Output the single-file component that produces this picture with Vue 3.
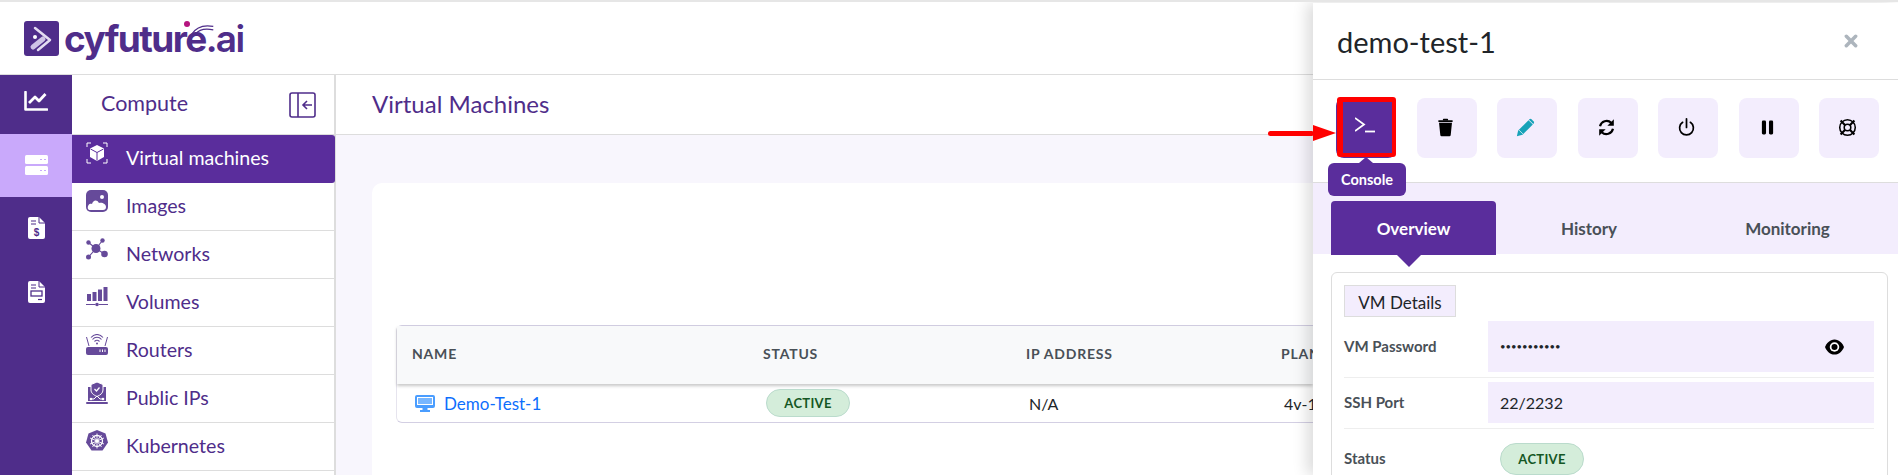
<template>
  <div class="app">
    <header class="topbar">
      <div class="logo">
        <svg class="logo-mark" viewBox="0 0 35 35">
          <rect width="35" height="35" rx="3" fill="#4f2d8a" />
          <path d="M11 7 L26 19 L14 29" fill="none" stroke="#e4dcf2" stroke-width="2.5" stroke-linecap="round" stroke-linejoin="round" />
          <path d="M9 26 L19 18" stroke="#cfc3e6" stroke-width="5" stroke-linecap="round" />
          <circle cx="11" cy="16" r="2" fill="#fff" />
        </svg>
        <span class="logo-text">cyfuture<span class="logo-ai">.ai</span></span>
        <span class="logo-dot"></span>
        <svg class="logo-arc" viewBox="0 0 30 14">
          <path d="M2 13 C7 5 16 2 27 4" fill="none" stroke="#4f2d8a" stroke-width="1.6" />
          <path d="M6 13 C10 8 18 6 27 8" fill="none" stroke="#4f2d8a" stroke-width="1.4" />
        </svg>
      </div>
    </header>

    <div class="body">
      <nav class="rail">
        <a v-for="item in railItems" :key="item.key" class="rail-item" :class="{ on: item.on }" :style="{ height: item.height + 'px' }">
          <svg :width="item.w" :height="item.h" :viewBox="`0 0 ${item.w} ${item.h}`" v-html="item.svg"></svg>
        </a>
      </nav>

      <aside class="side">
        <div class="side-head">
          <span>Compute</span>
          <svg class="collapse" viewBox="0 0 27 26" fill="none" stroke="#4f2d8a" stroke-width="1.6">
            <rect x="1" y="1" width="25" height="24" rx="2" />
            <path d="M9 1V25" />
            <path d="M23 13H14M18 9l-4 4 4 4" />
          </svg>
        </div>
        <a v-for="row in sideRows" :key="row.label" class="side-row" :class="{ active: row.active }">
          <svg class="side-icon" viewBox="0 0 22 22" v-html="row.svg"></svg>
          <span class="side-label">{{ row.label }}</span>
        </a>
        <div class="side-row"></div>
      </aside>

      <main class="main">
        <div class="page-head">Virtual Machines</div>
        <div class="page-body">
          <section class="card">
            <div class="table">
              <div class="thead">
                <div v-for="col in columns" :key="col" class="th">{{ col }}</div>
              </div>
              <div class="tbody">
                <div class="td name-cell">
                  <svg class="monitor" viewBox="0 0 20 17" fill="#4a9dff">
                    <path d="M2 0H18A2 2 0 0 1 20 2V11A2 2 0 0 1 18 13H2A2 2 0 0 1 0 11V2A2 2 0 0 1 2 0ZM2 2V10H18V2Z" />
                    <path d="M3 3H17V9H3Z" opacity=".75" />
                    <path d="M7.5 13H12.5V15H15V17H5V15H7.5Z" />
                  </svg>
                  <a class="vm-link">Demo-Test-1</a>
                </div>
                <div class="td"><span class="badge">ACTIVE</span></div>
                <div class="td">N/A</div>
                <div class="td">4v-1</div>
              </div>
            </div>
          </section>
        </div>
      </main>
    </div>

    <aside class="drawer">
      <div class="drawer-head">
        <h2>demo-test-1</h2>
        <svg class="close" viewBox="0 0 12 12" stroke="#adb5bd" stroke-width="3" stroke-linecap="round">
          <path d="M2 2L10 10M10 2L2 10" />
        </svg>
      </div>

      <div class="actions">
        <button v-for="action in actions" :key="action.key" class="action" :class="{ current: action.current }">
          <svg class="action-icon" viewBox="0 0 22 22" v-html="action.svg"></svg>
          <span v-if="action.current" class="tooltip">Console</span>
        </button>
      </div>

      <div class="tabs">
        <div v-for="tab in tabs" :key="tab.label" class="tab" :class="{ active: tab.active }" :style="{ width: tab.width + 'px' }">{{ tab.label }}</div>
      </div>

      <div class="details">
        <div class="details-title">VM Details</div>
        <div class="detail-row">
          <label>VM Password</label>
          <div class="value tall">
            <span class="dots">•••••••••••</span>
            <svg class="eye" viewBox="0 0 20 16">
              <path d="M10 0C5 0 1.500 4 0 8C1.500 12 5 16 10 16S18.500 12 20 8C18.500 4 15 0 10 0Z" fill="#000" />
              <circle cx="10" cy="8" r="5" fill="#fff" />
              <circle cx="10" cy="8" r="3.200" fill="#000" />
            </svg>
          </div>
        </div>
        <div class="detail-row">
          <label>SSH Port</label>
          <div class="value">22/2232</div>
        </div>
        <div class="detail-row plain">
          <label>Status</label>
          <div class="status-wrap"><span class="badge wide">ACTIVE</span></div>
        </div>
      </div>
    </aside>

    <div class="red-arrow">
      <span class="arrow-line"></span>
      <span class="arrow-head"></span>
    </div>
  </div>
</template>

<script setup>
const docTop = `<path d="M2 0H11L17 6V20A2 2 0 0 1 15 22H2A2 2 0 0 1 0 20V2A2 2 0 0 1 2 0Z" fill="#fff"/><path d="M11 0V6H17" fill="none" stroke="#4f2d8a" stroke-width="1"/><path d="M3 4H8M3 7H8" stroke="#4f2d8a" stroke-width="1.2"/>`

const railItems = [
  {
    key: 'chart', height: 59, w: 24, h: 20,
    svg: `<path d="M1.500 1V18.500H23" fill="none" stroke="#fff" stroke-width="2.600" stroke-linecap="round" stroke-linejoin="round"/><path d="M5 12L11 6L15 10L21.500 3" fill="none" stroke="#fff" stroke-width="2.800" stroke-linejoin="round"/>`
  },
  {
    key: 'server', height: 63, on: true, w: 24, h: 20,
    svg: `<rect x="1" width="23" height="9" rx="1.500" fill="#fff"/><rect x="1" y="11" width="23" height="9" rx="1.500" fill="#fff"/><path d="M16 4.500h2M20 4.500h2M16 15.500h2M20 15.500h2" stroke="#c9a9fb" stroke-width="1"/>`
  },
  {
    key: 'invoice', height: 64, w: 17, h: 22,
    svg: `${docTop}<text x="8.500" y="18.500" font-family="Liberation Sans" font-size="10" font-weight="700" text-anchor="middle" fill="#4f2d8a">$</text>`
  },
  {
    key: 'billing', height: 64, w: 17, h: 22,
    svg: `${docTop}<rect x="3" y="10" width="11" height="5" fill="none" stroke="#4f2d8a" stroke-width="1.300"/><path d="M10 18.500H14" stroke="#4f2d8a" stroke-width="1.200"/>`
  }
]

const sideRows = [
  {
    label: 'Virtual machines', active: true,
    svg: `<path d="M1 5V1H5M17 1H21V5M21 17V21H17M5 21H1V17" fill="none" stroke="#fff" stroke-width="1"/><path d="M11 3L18 6.500V15L11 19L4 15V6.500Z" fill="#fff"/><path d="M4.500 7L11 10.500L17.500 7M11 10.500V18.500" fill="none" stroke="#5a2d9c" stroke-width="1"/>`
  },
  {
    label: 'Images',
    svg: `<rect width="22" height="22" rx="5" fill="#664a9a"/><circle cx="16" cy="7" r="2" fill="#fff"/><path d="M2 19C1 15 4 13 6 14C7 10 11 9 13 13C16 12 20 14 20 17C20 19 19 20 17 20H5C3.500 20 2.500 20 2 19Z" fill="#fff"/>`
  },
  {
    label: 'Networks',
    svg: `<path d="M10 10.500L2.500 4.500M10 10.500L16.500 2.500M10 10.500L2.500 19M10 10.500L18.500 16" stroke="#664a9a" stroke-width="1.100"/><circle cx="10" cy="10.500" r="4.500" fill="#664a9a"/><circle cx="2.500" cy="4.500" r="2.200" fill="#664a9a"/><circle cx="16.500" cy="2.500" r="2.200" fill="#664a9a"/><circle cx="2.500" cy="19" r="2.500" fill="#664a9a"/><circle cx="18.500" cy="16" r="3.300" fill="#664a9a"/>`
  },
  {
    label: 'Volumes',
    svg: `<path d="M1 8H5V15H1ZM6.500 6H10.500V15H6.500ZM12 3.500H16V15H12ZM17.500 1H21.500V15H17.500Z" fill="#664a9a"/><path d="M0 18.500H9M13 18.500H22" stroke="#664a9a" stroke-width="1.200"/><circle cx="11" cy="18.500" r="1.800" fill="#664a9a"/>`
  },
  {
    label: 'Routers',
    svg: `<path d="M6.500 5.500C9 2.500 13 2.500 15.500 5.500M8.500 7.500C10 6 12 6 13.500 7.500M5 3.500C8.500 -.500 13.500 -.500 17 3.500" fill="none" stroke="#664a9a" stroke-width="1.100"/><circle cx="11" cy="9.500" r="1" fill="#664a9a"/><path d="M.500 3L3 12M21.500 3L19 12" stroke="#664a9a" stroke-width="1"/><rect y="13" width="22" height="8" rx="2" fill="#664a9a"/><path d="M14 15.500V18M16.500 15.500V18M19 15.500V18" stroke="#fff" stroke-width="1"/>`
  },
  {
    label: 'Public IPs',
    svg: `<path d="M2 5H20V19H2Z" fill="#664a9a"/><path d="M11 0L17 2.500V8C17 11 14.500 13 11 14.500C7.500 13 5 11 5 8V2.500Z" fill="#664a9a" stroke="#fff" stroke-width="1"/><path d="M8.500 7L10.500 9L13.500 5.500" fill="none" stroke="#fff" stroke-width="1.200"/><path d="M4 17H8L11 14L14 17H18" fill="none" stroke="#fff" stroke-width="1"/><circle cx="5" cy="17" r="1.300" fill="#fff"/><circle cx="17" cy="17" r="1.300" fill="#fff"/><rect y="20" width="22" height="2" rx="1" fill="#664a9a"/>`
  },
  {
    label: 'Kubernetes',
    svg: `<path d="M11 0L19.500 3.500L22 12.500L16.500 20.500H5.500L0 12.500L2.500 3.500Z" fill="#664a9a"/><circle cx="11" cy="11" r="5.500" fill="none" stroke="#fff" stroke-width="1.300"/><path d="M11 3.500V18.500M4 8L18 14M18 8L4 14M6.500 17L15.500 5M15.500 17L6.500 5" stroke="#fff" stroke-width=".9"/><circle cx="11" cy="11" r="1.800" fill="#fff"/>`
  }
]

const columns = ['Name', 'Status', 'IP Address', 'Plan']

const actions = [
  {
    key: 'console', current: true,
    svg: `<path d="M0 2L9 8.500L0 15" fill="none" stroke="#fff" stroke-width="1.800"/><path d="M10 15.500H20" stroke="#fff" stroke-width="1.800"/>`
  },
  {
    key: 'delete',
    svg: `<path d="M3.500 5.500H18.500L17 20A1.500 1.500 0 0 1 15.500 21H6.500A1.500 1.500 0 0 1 5 20Z" fill="#000"/><rect x="2.500" y="2.500" width="17" height="2" rx="1" fill="#000"/><rect x="8" y="1" width="6" height="2" rx=".800" fill="#000"/>`
  },
  {
    key: 'edit',
    svg: `<path d="M1 21L2.500 14.500L14.500 2.500L19.500 7.500L7.500 19.500Z" fill="#17a2b8"/><path d="M15.500 1.500A2 2 0 0 1 18 1.500L20.500 4A2 2 0 0 1 20.500 6.500L20 7L15 2Z" fill="#17a2b8"/><path d="M3.500 14L8 18.500" stroke="#fff" stroke-width=".8"/>`
  },
  {
    key: 'restart',
    svg: `<path d="M3.500 9.500A7.800 7.800 0 0 1 16.500 5.500" fill="none" stroke="#000" stroke-width="2.500"/><path d="M19.500 1.500V9H12Z" fill="#000"/><path d="M18.500 12.500A7.800 7.800 0 0 1 5.500 16.500" fill="none" stroke="#000" stroke-width="2.500"/><path d="M2.500 20.500V13H10Z" fill="#000"/>`
  },
  {
    key: 'power',
    svg: `<path d="M6.500 5A8 8 0 1 0 15.500 5" fill="none" stroke="#000" stroke-width="2" stroke-linecap="round"/><path d="M11 1V11" stroke="#000" stroke-width="2" stroke-linecap="round"/>`
  },
  {
    key: 'pause',
    svg: `<rect x="4.500" y="3" width="4.800" height="16" rx="1.500" fill="#000"/><rect x="12.700" y="3" width="4.800" height="16" rx="1.500" fill="#000"/>`
  },
  {
    key: 'rescue',
    svg: `<circle cx="11" cy="11" r="9" fill="none" stroke="#000" stroke-width="1.800"/><circle cx="11" cy="11" r="3.800" fill="none" stroke="#000" stroke-width="1.800"/><path d="M3 3L8 8M19 3L14 8M3 19L8 14M19 19L14 14" stroke="#000" stroke-width="2.400"/>`
  }
]

const tabs = [
  { label: 'Overview', active: true, width: 165 },
  { label: 'History', width: 186 },
  { label: 'Monitoring', width: 211 }
]
</script>

<style scoped>
.app {
  position: relative;
  width: 1898px;
  height: 475px;
  overflow: hidden;
  background: #fff;
  border-top: 2px solid #e6e6e6;
  box-sizing: border-box;
  font-family: "Lato", "Noto Sans", sans-serif;
  color: #4f2d8a;
}

.topbar {
  height: 73px;
  box-sizing: border-box;
  border-bottom: 1px solid #ddd;
  padding: 19px 0 0 24px;
}

.logo {
  position: relative;
  display: flex;
  align-items: center;
  gap: 5px;
  width: 230px;
  height: 35px;
}

.logo-mark {
  width: 35px;
  height: 35px;
  flex: none;
}

.logo-text {
  font-family: "Inter", sans-serif;
  font-size: 37px;
  font-weight: 700;
  letter-spacing: -1.600px;
  line-height: 35px;
  color: #4f2d8a;
}

.logo-ai {
  font-weight: 600;
}

.logo-dot {
  position: absolute;
  left: 160px;
  top: 0;
  width: 6px;
  height: 6px;
  border-radius: 50%;
  background: #b5157f;
}

.logo-arc {
  position: absolute;
  left: 166px;
  top: 2px;
  width: 26px;
  height: 12px;
}

.body {
  display: flex;
  height: 400px;
}

.rail {
  width: 72px;
  flex: none;
  background: #4f2d8a;
}

.rail-item {
  display: flex;
  align-items: flex-start;
  justify-content: center;
  padding-top: 16px;
  box-sizing: border-box;
}

.rail-item.on {
  background: #c9a9fb;
  padding-top: 21px;
}

.rail-item:nth-child(3),
.rail-item:nth-child(4) {
  padding-top: 20px;
}

.side {
  width: 264px;
  flex: none;
  box-sizing: border-box;
  border-right: 2px solid #ddd;
}

.side-head {
  display: flex;
  align-items: center;
  justify-content: space-between;
  height: 60px;
  box-sizing: border-box;
  padding: 0 18px 0 29px;
  border-bottom: 1px solid #ddd;
  font-size: 21.500px;
}

.side-head span {
  margin-top: -3px;
}

.collapse {
  width: 27px;
  height: 26px;
}

.side-row {
  display: flex;
  align-items: flex-start;
  gap: 18px;
  height: 48px;
  box-sizing: border-box;
  padding: 7px 0 0 14px;
  border-bottom: 1px solid #ddd;
  font-size: 19.600px;
}

.side-row.active {
  background: #5a2d9c;
  color: #fff;
  border-bottom: 0;
  border-radius: 0 3px 3px 0;
  margin-right: -1px;
}

.side-icon {
  width: 22px;
  height: 22px;
  flex: none;
}

.side-label {
  margin-top: 4px;
  line-height: 23px;
}

.main {
  flex: 1;
  min-width: 0;
  display: flex;
  flex-direction: column;
}

.page-head {
  display: flex;
  align-items: center;
  height: 60px;
  box-sizing: border-box;
  padding: 0 0 3px 36px;
  border-bottom: 1px solid #ddd;
  font-size: 24px;
}

.page-body {
  flex: 1;
  min-width: 0;
  padding: 48px 585px 0 36px;
  background: #f8f6fd;
}

.card {
  height: 100%;
  padding: 142px 0 0 24px;
  box-sizing: border-box;
  background: #fff;
  border-radius: 10px 0 0 0;
  overflow: hidden;
}

.table {
  border-top: 1px solid #d3cfe3;
  border-bottom: 1px solid #d3cfe3;
  border-left: 1px solid #e6e4ee;
  border-radius: 6px 0 0 6px;
}

.thead,
.tbody {
  display: grid;
  grid-template-columns: 351px 263px 255px 1fr;
}

.thead {
  height: 58px;
  align-items: center;
  padding-bottom: 3px;
  box-sizing: border-box;
  background: #f8f9fa;
  box-shadow: 0 2px 3px rgba(0, 0, 0, 0.22);
  position: relative;
}

.th {
  padding-left: 15px;
  font-size: 14px;
  font-weight: 700;
  letter-spacing: 0.8px;
  text-transform: uppercase;
  color: #495057;
  white-space: nowrap;
  overflow: hidden;
}

.tbody {
  height: 38px;
  align-items: center;
}

.td {
  padding-left: 18px;
  font-size: 16px;
  color: #212529;
  white-space: nowrap;
  overflow: hidden;
}

.name-cell {
  display: flex;
  align-items: center;
  gap: 9px;
}

.monitor {
  width: 20px;
  height: 17px;
  flex: none;
}

.vm-link {
  color: #0d6efd;
  font-size: 17px;
}

.badge {
  display: inline-flex;
  align-items: center;
  justify-content: center;
  width: 84px;
  height: 28px;
  box-sizing: border-box;
  border: 1px solid #badbcc;
  border-radius: 14px;
  background: #d4edda;
  color: #155724;
  font-size: 13px;
  font-weight: 700;
  letter-spacing: 0.3px;
}

.badge.wide {
  height: 32px;
  border-radius: 16px;
}

.drawer {
  position: absolute;
  top: 1px;
  right: 0;
  bottom: 0;
  width: 585px;
  background: #fff;
  box-shadow: -6px 0 14px rgba(0, 0, 0, 0.14);
}

.drawer-head {
  display: flex;
  align-items: center;
  justify-content: space-between;
  height: 77px;
  box-sizing: border-box;
  padding: 0 40px 0 24px;
  border-bottom: 1px solid #ddd;
}

.drawer-head h2 {
  margin: 0;
  font-size: 29px;
  font-weight: 400;
  color: #212529;
}

.close {
  width: 14px;
  height: 14px;
}

.actions {
  display: flex;
  gap: 20.500px;
  height: 102px;
  box-sizing: border-box;
  padding: 18px 0 0 23px;
}

.action {
  position: relative;
  display: flex;
  align-items: center;
  justify-content: center;
  width: 60px;
  height: 60px;
  padding: 0;
  border: 0;
  border-radius: 8px;
  background: #f3edfd;
}

.action-icon {
  width: 19px;
  height: 19px;
  margin: 0 3px 2px 0;
}

.action.current {
  background: #5a2d9c;
}

.action.current::after {
  content: "";
  position: absolute;
  left: 1px;
  top: -1px;
  right: 0;
  bottom: 1px;
  box-sizing: border-box;
  border-style: solid;
  border-color: #f00;
  border-width: 5px 4px 4px 6px;
  border-radius: 3px;
}

.action.current .action-icon {
  width: 22px;
  height: 22px;
  margin: 0 0 2px 0;
}

.tooltip {
  position: absolute;
  left: -8px;
  top: 65px;
  width: 78px;
  height: 33px;
  display: flex;
  align-items: center;
  justify-content: center;
  border-radius: 6px;
  background: #5a2d9c;
  color: #fff;
  font-family: "Lato", sans-serif;
  font-size: 14.500px;
  font-weight: 700;
  z-index: 2;
}

.tooltip::before {
  content: "";
  position: absolute;
  left: 31px;
  top: -6px;
  border-left: 7px solid transparent;
  border-right: 7px solid transparent;
  border-bottom: 6px solid #5a2d9c;
}

.tabs {
  display: flex;
  height: 72px;
  box-sizing: border-box;
  padding: 18px 0 0 18px;
  border-top: 1px solid #ddd;
  background: #f3edfd;
}

.tab {
  position: relative;
  display: flex;
  align-items: center;
  justify-content: center;
  margin-bottom: -1px;
  font-size: 17px;
  font-weight: 700;
  color: #495057;
}

.tab.active {
  border-radius: 4px 4px 0 0;
  background: #5a2d9c;
  color: #fff;
}

.tab.active::after {
  content: "";
  position: absolute;
  left: 66px;
  bottom: -12px;
  border-left: 12px solid transparent;
  border-right: 12px solid transparent;
  border-top: 12px solid #5a2d9c;
}

.details {
  margin: 18px 10px 0 18px;
  padding: 12px 13px 0 12px;
  border: 1px solid #ddd;
  border-radius: 6px;
}

.details-title {
  width: 112px;
  height: 32px;
  margin-bottom: 4px;
  line-height: 33px;
  box-sizing: border-box;
  text-align: center;
  border: 1px solid #ddd;
  background: #f3edfd;
  color: #212529;
  font-size: 17px;
}

.detail-row {
  display: grid;
  grid-template-columns: 144px 1fr;
  align-items: center;
  padding-bottom: 5px;
  margin-bottom: 4px;
  border-bottom: 1px solid #eee;
}

.detail-row.plain {
  border-bottom: 0;
  padding-top: 10px;
}

.detail-row label {
  margin-top: -2px;
  font-size: 15px;
  font-weight: 700;
  color: #495057;
}

.value {
  display: flex;
  align-items: center;
  justify-content: space-between;
  height: 41px;
  padding: 0 30px 0 12px;
  background: #f3edfd;
  font-size: 16px;
  color: #212529;
}

.value.tall {
  height: 51px;
}

.dots {
  font-size: 9.500px;
}

.eye {
  width: 19px;
  height: 16px;
}

.status-wrap {
  padding-left: 12px;
}

.red-arrow {
  position: absolute;
  left: 1268px;
  top: 123px;
  display: flex;
  align-items: center;
}

.arrow-line {
  width: 46px;
  height: 5px;
  border-radius: 3px;
  background: #f00;
}

.arrow-head {
  width: 0;
  height: 0;
  margin-left: -1px;
  border-top: 8px solid transparent;
  border-bottom: 8px solid transparent;
  border-left: 23px solid #f00;
}
</style>
